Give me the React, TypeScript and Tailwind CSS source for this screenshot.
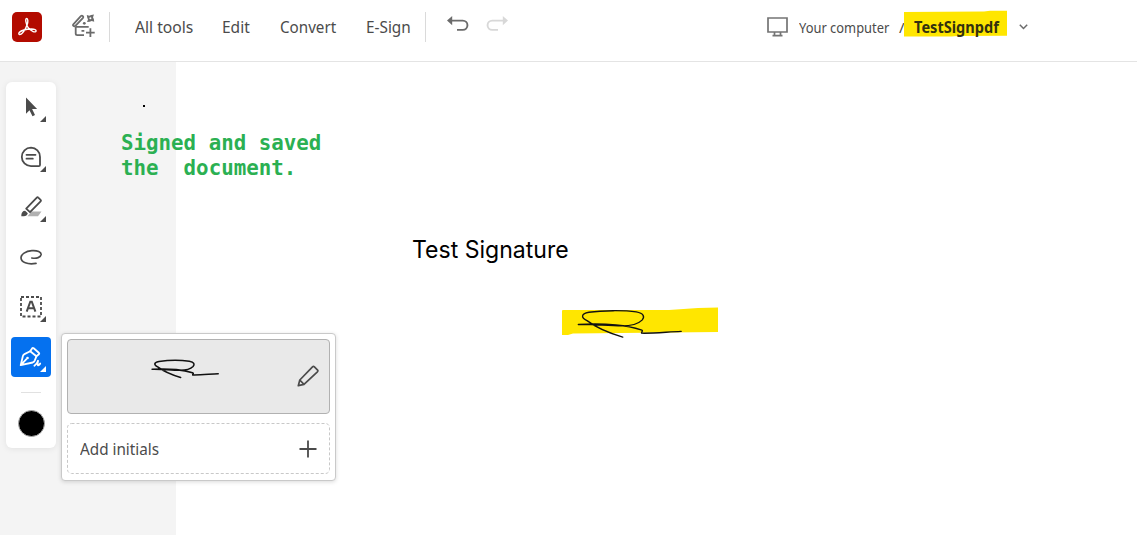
import React from "react"

const menu = [
  { label: "All tools", box: "w-[87px]", scale: "scale-x-[0.95]" },
  { label: "Edit", box: "w-[58px]", scale: "scale-x-[0.94]" },
  { label: "Convert", box: "w-[86px]", scale: "scale-x-[0.92]" },
  { label: "E-Sign", box: "w-[59px]", scale: "scale-x-[0.93]" },
]

function AcrobatLogo() {
  return (
    <svg width="30" height="30" viewBox="0 0 30 30" className="shrink-0">
      <rect width="30" height="30" rx="5" fill="#b30b00" />
      <path
        d="M14.6 6.5c1.5 0 1.6 3.2.5 6.3-1.4 4.4-5 9.8-7.4 9.8-2.3-.9.2-3.6 4.1-4.6 4.3-1.2 12.1-1.7 12.3.8.1 2.5-5.3.6-8.1-3.5-1.8-2.6-3.2-8.8-1.4-8.8Z"
        fill="none"
        stroke="#fff"
        strokeWidth="1.4"
      />
    </svg>
  )
}

function AssistIcon() {
  return (
    <svg width="24" height="26" viewBox="0 0 24 26" fill="none" stroke="#6b6b6b" strokeWidth="1.8" className="shrink-0">
      <path d="M1.300 10.300 8.800 2.200c.6-.6 1.500-.6 2-.1s.6 1.300 0 2L3.400 11.800c-.6.600-1.500.500-2 .1s-.6-1-.1-1.600Z" />
      <path d="M3.700 13v6.600c0 1 .6 1.600 1.600 1.600H12M3.700 12.900h13M9.500 16.800h2.800" />
      <path d="M18.400 14.300v8.600M14 18.600h8.700" />
      <path d="m14.800.9 2.500.9 1.800-.9 2.900-.3-1 2.600.9 2 .3 2.600-2.500-.9-2 .9-2.700.3 1-2.700-.8-1.900Z" fill="#6b6b6b" stroke="none" />
      <circle cx="18.400" cy="4.200" r="1" fill="#fff" stroke="none" />
      <circle cx="12.300" cy="9.300" r="1.400" fill="#6b6b6b" stroke="none" />
    </svg>
  )
}

function UndoIcon({ className }: { className: string }) {
  return (
    <svg width="22" height="18" viewBox="0 0 22 18" className={className}>
      <path d="M0 5.600 5.200 1v9.200Z" fill="currentColor" />
      <path d="M4 5.600h11.800a4.500 4.500 0 0 1 0 9.300H10" fill="none" stroke="currentColor" strokeWidth="1.900" />
    </svg>
  )
}

function SignatureStroke(props: { width: number; height: number; stroke: number }) {
  return (
    <svg width={props.width} height={props.height} viewBox="0 0 106 29" fill="none" stroke="#111" className="overflow-visible">
      <path
        d="M46 28C32 24 17 17 9 11 3 8 2 4 11 2.300 25 .3 48 .2 60 2c8 1.500 9 5 6 8.500-4 4-12 6-21 6-15 0-31-2-45-1.500 14-1 27-.8 39 .5 11 1 20 3 26 5 3 1 0 2 .5 3.500 13 .3 26-1.200 41-1.800"
        strokeWidth={props.stroke}
        strokeLinecap="round"
        strokeLinejoin="round"
      />
    </svg>
  )
}

function Corner({ className }: { className: string }) {
  return (
    <svg width="6" height="6" viewBox="0 0 6 6" className={`absolute right-[5px] bottom-[5px] ${className}`}>
      <path d="M6 0v6H0Z" fill="currentColor" />
    </svg>
  )
}

function Tool(props: { children: React.ReactNode; active?: boolean; corner?: boolean }) {
  return (
    <button
      className={`relative flex items-center justify-center w-10 h-10 rounded ${
        props.active ? "bg-[#0571ef]" : ""
      }`}
    >
      {props.children}
      {props.corner && <Corner className={props.active ? "text-white" : "text-[#4b4b4b]"} />}
    </button>
  )
}

function Toolbar() {
  return (
    <nav className="flex flex-col items-center w-[50px] h-[366px] pt-[5px] bg-white rounded-md shadow-[0_1px_6px_rgba(0,0,0,0.08)]">
      <div className="flex flex-col gap-2.5">
        <Tool corner>
          <svg width="24" height="24" viewBox="0 0 24 24">
            <path d="M7 2.500v16.200l3.500-3.500 3 6 2.500-1.200-2.900-6h5Z" fill="#4b4b4b" />
          </svg>
        </Tool>
        <Tool corner>
          <svg width="24" height="24" viewBox="0 0 24 24" fill="none" stroke="#4b4b4b" strokeWidth="1.800">
            <path d="M12 2.700a9.200 9.200 0 0 0 0 18.400h7.800c.8 0 1.200-.5 1.200-1.200v-8A9.100 9.100 0 0 0 12 2.700Z" />
            <path d="M7.500 9.800h9M7.500 13.700h6.300" strokeLinecap="round" />
          </svg>
        </Tool>
        <Tool corner>
          <svg width="24" height="24" viewBox="0 0 24 24">
            <path d="M12.500 16.500h10L19 21.300H8.500Z" fill="#b1b1b1" />
            <path d="M7.200 13.600 17.800 2.600c.5-.5 1-.5 1.500 0l2.300 2.200c.5.500.5 1 0 1.500L11 17.200Z" fill="none" stroke="#4b4b4b" strokeWidth="1.800" strokeLinejoin="round" />
            <path d="M2.300 21.200c0-2.500.6-4 2.200-5.200l1.600-.2 2.700 2.500c-.5 1.900-2 3-4.300 2.900Z" fill="#4b4b4b" />
          </svg>
        </Tool>
        <Tool>
          <svg width="24" height="24" viewBox="0 0 24 24">
            <path
              d="M12.800 13c5 .8 8.900-.6 9.300-3.300.3-2.500-3.700-4.500-9.200-4C6.500 6.200 2 9.300 2 12.800c0 4.500 6.500 7 15 5.600"
              fill="none"
              stroke="#4b4b4b"
              strokeWidth="1.700"
              strokeLinecap="round"
            />
          </svg>
        </Tool>
        <Tool corner>
          <svg width="24" height="24" viewBox="0 0 24 24">
            <rect x="2" y="2" width="20" height="19.500" fill="none" stroke="#4b4b4b" strokeWidth="1.800" strokeDasharray="3 2" />
            <path d="m7.700 16.700 3.600-10h1.500l3.600 10M9 13.200h6" fill="none" stroke="#4b4b4b" strokeWidth="2" />
          </svg>
        </Tool>
        <Tool active corner>
          <svg width="24" height="24" viewBox="0 0 24 24" fill="none" stroke="#fff" strokeWidth="1.800" strokeLinejoin="round" strokeLinecap="round">
            <path d="M1.700 20.200 3.900 11c.3-1 .8-1.500 1.600-1.900l5.700-2.800 6.200 5-1.700 4.300c-.5 1.100-1 1.500-2 1.900l-12 2.700 5.700-6" />
            <path d="m11.200 6.300 1.900-2.900c.5-.6 1-.6 1.600-.1L19.800 7.700c.6.500.6 1 .1 1.600l-2.500 2" />
            <circle cx="8.500" cy="13" r="1.300" fill="#fff" stroke="none" />
            <path d="M15.400 20.700c1.900-1.300 3-2.900 3.700-4.900-.7 2.300-.8 3.700-.2 4.500.8.500 1.700-.8 2.300-1.800" />
          </svg>
        </Tool>
      </div>
      <div className="w-5 h-px mt-[15px] bg-[#e1e1e1]" />
      <div className="size-[27px] mt-[17px] rounded-full bg-black border border-[#aaa]" />
    </nav>
  )
}

function SignaturePopover() {
  return (
    <div className="absolute left-[61px] top-[271px] flex flex-col gap-[9px] w-[275px] h-[148px] p-[5px] bg-white border border-[#c9c9c9] rounded shadow-[0_1px_4px_rgba(0,0,0,0.15)]">
      <div className="flex h-[75px] pt-5 pl-[84px] pr-2.5 justify-between bg-[#e9e9e9] border border-[#b1b1b1] rounded">
        <SignatureStroke width={66} height={18} stroke={2.5} />
        <svg width="22" height="22" viewBox="0 0 22 22" className="mt-[5px]" fill="none" stroke="#4b4b4b" strokeWidth="1.700" strokeLinejoin="round">
          <path d="M1.300 20.700 2.800 15 15.500 1.900c.6-.6 1.300-.6 1.900 0l3 3c.6.600.6 1.300 0 1.900L7 19.300Zm1.500-5.700L7 19.300" />
        </svg>
      </div>
      <div className="relative flex items-center justify-between h-[51px] pl-[13px] pr-[13px]">
        <svg className="absolute inset-0" width="263" height="51">
          <rect x=".5" y=".5" width="262" height="50" rx="4" fill="none" stroke="#c8c8c8" strokeDasharray="3 2" />
        </svg>
        <span className="mt-px text-[16.500px] text-[#4b4b4b] whitespace-nowrap origin-left scale-x-[0.925]">Add initials</span>
        <svg width="18" height="18" viewBox="0 0 18 18" stroke="#4b4b4b" strokeWidth="1.800">
          <path d="M9 .5v17M.5 9h17" />
        </svg>
      </div>
    </div>
  )
}

export default function App() {
  return (
    <div className="flex flex-col w-[1137px] h-[535px] overflow-hidden bg-white font-['Noto_Sans',sans-serif] text-[#4b4b4b]">
      <header className="flex items-center h-[62px] pl-3 pb-[7px] border-b border-[#e4e4e4] shrink-0">
        <AcrobatLogo />
        <div className="ml-[30px]">
          <AssistIcon />
        </div>
        <div className="w-px h-[30px] ml-[13px] bg-[#dadada]" />
        <div className="flex ml-[25px] text-[16.500px]">
          {menu.map((item) => (
            <span key={item.label} className={`${item.box} whitespace-nowrap`}>
              <span className={`inline-block origin-left ${item.scale}`}>{item.label}</span>
            </span>
          ))}
        </div>
        <div className="w-px h-[30px] bg-[#dadada]" />
        <UndoIcon className="ml-[21px] mb-1.5 text-[#6b6b6b]" />
        <UndoIcon className="ml-[17px] mb-1.5 text-[#d8d8d8] -scale-x-100" />
        <svg width="21" height="20" viewBox="0 0 21 20" className="ml-[259px]" fill="none" stroke="#747474" strokeWidth="1.700">
          <path d="M1 1h19v14H1Zm6.500 14v3.500m6-3.500v3.500M5.500 18.600h10" />
        </svg>
        <span className="w-[100px] ml-[11px] text-[15px] whitespace-nowrap">
          <span className="inline-block origin-left scale-x-[0.86]">Your computer</span>
        </span>
        <span className="w-[5px] text-[15px]">/</span>
        <span className="relative flex items-center w-[103px] h-[27px] pl-2.5 -mt-2 shrink-0">
          <svg className="absolute inset-0" width="103" height="27">
            <path d="M0 2 80 1.500l6-.8h17v25l-50 .300-5 .5H0Z" fill="#ffe600" />
          </svg>
          <span className="relative mt-[7px] text-base font-bold text-[#33310f] whitespace-nowrap origin-left scale-x-[0.91]">
            TestSignpdf
          </span>
        </span>
        <svg width="9" height="6" viewBox="0 0 9 6" className="ml-3" fill="none" stroke="#6b6b6b" strokeWidth="1.500">
          <path d="m.8.800 3.700 3.700L8.200.800" />
        </svg>
      </header>
      <main className="relative flex grow">
        <aside className="w-[176px] pl-1.5 pt-5 bg-[#f4f4f4]">
          <Toolbar />
        </aside>
        <section className="grow pl-[236px] pt-[170px] text-black">
          <h1 className="h-9 text-2xl leading-9 font-['Inter',sans-serif] whitespace-nowrap origin-left scale-x-[0.96]">Test Signature</h1>
          <div className="relative w-[157px] h-7 mt-[39px] ml-[150px]">
            <svg className="absolute inset-0" width="157" height="28">
              <path d="M0 4q0-1 1-1h106L136 1l20-.500V25L11 26.500l-5 1.500H0Z" fill="#ffe600" />
            </svg>
            <div className="absolute left-[15px] top-[3px]">
              <SignatureStroke width={105} height={28} stroke={1.4} />
            </div>
          </div>
        </section>
        <div className="absolute left-[143px] top-[43px] size-0.5 bg-black" />
        <p className="absolute left-[121px] top-[69px] text-[20.800px] leading-[25px] font-bold text-[#2bb052] whitespace-pre font-['DejaVu_Sans_Mono',monospace]">
          {"Signed and saved\nthe  document."}
        </p>
        <SignaturePopover />
      </main>
    </div>
  )
}
